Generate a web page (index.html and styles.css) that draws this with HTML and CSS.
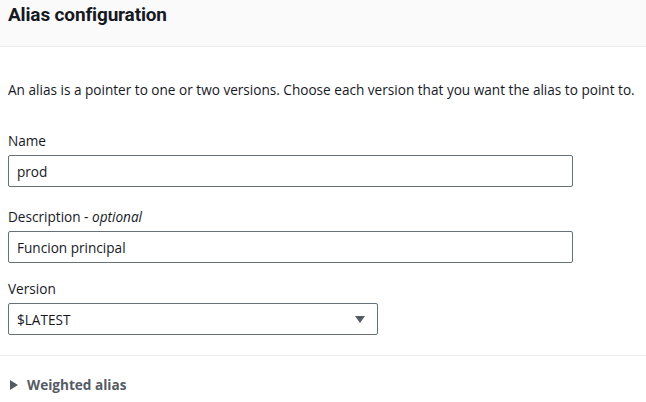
FILE: index.html
```html
<!DOCTYPE html>
<html>
<head>
<meta charset="utf-8">
<link rel="stylesheet" href="styles.css">
</head>
<body>
<div class="panel">
  <div class="panel-header">
    <h2 class="title">Alias configuration</h2>
  </div>
  <div class="panel-body">
    <p class="intro">An alias is a pointer to one or two versions. Choose each version that you want the alias to point to.</p>
    <div class="field">
      <label class="label">Name</label>
      <div class="input wide">prod</div>
    </div>
    <div class="field field-desc">
      <label class="label">Description - <i>optional</i></label>
      <div class="input wide">Funcion principal</div>
    </div>
    <div class="field field-version">
      <label class="label">Version</label>
      <div class="input select">
        <span>$LATEST</span>
        <svg class="caret" width="10" height="7" viewBox="0 0 10 7"><path d="M0 0 H10 L5 7 Z" fill="#545b64"/></svg>
      </div>
    </div>
  </div>
  <div class="expander">
    <svg class="tri" width="8" height="10" viewBox="0 0 8 10"><path d="M0 0 L8 5 L0 10 Z" fill="#545b64"/></svg>
    <span>Weighted alias</span>
  </div>
</div>
</body>
</html>
```
FILE: styles.css
```css
html, body {
  margin: 0;
  padding: 0;
  background: #ffffff;
}
body {
  font-family: "Open Sans", "Noto Sans", sans-serif;
  color: #16191f;
  font-size: 14px;
}
.panel-header {
  background: #fafafa;
  border-bottom: 1px solid #eaeded;
  height: 47px;
  box-sizing: border-box;
  padding: 2px 8px 0;
}
.title {
  margin: 0;
  font-family: "Roboto", sans-serif;
  font-weight: 700;
  font-size: 19px;
  line-height: 26px;
  letter-spacing: -0.15px;
}
.panel-body {
  padding: 0 8px;
}
.intro {
  margin: 33px 0 0;
  line-height: 20px;
  font-size: 13.6px;
  white-space: nowrap;
}
.field {
  display: flex;
  flex-direction: column;
}
.label {
  line-height: 20px;
  margin-top: 31px;
  margin-bottom: 4px;
  font-size: 13.6px;
}
.field-desc .label {
  margin-top: 20px;
}
.field-version .label {
  margin-top: 16px;
}
.input {
  box-sizing: border-box;
  height: 32px;
  border: 1px solid #687078;
  border-radius: 2px;
  padding: 0 8px;
  display: flex;
  align-items: center;
  font-size: 13.6px;
}
.wide {
  width: 565px;
}
.select {
  width: 370px;
  justify-content: space-between;
  padding-right: 12px;
}
.caret {
  display: block;
}
.expander {
  margin-top: 20px;
  border-top: 1px solid #eaeded;
  padding: 19px 0 0 10px;
  display: flex;
  align-items: center;
  gap: 9px;
  color: #545b64;
  font-weight: 700;
  font-size: 13.6px;
}
.tri {
  display: block;
}
```
